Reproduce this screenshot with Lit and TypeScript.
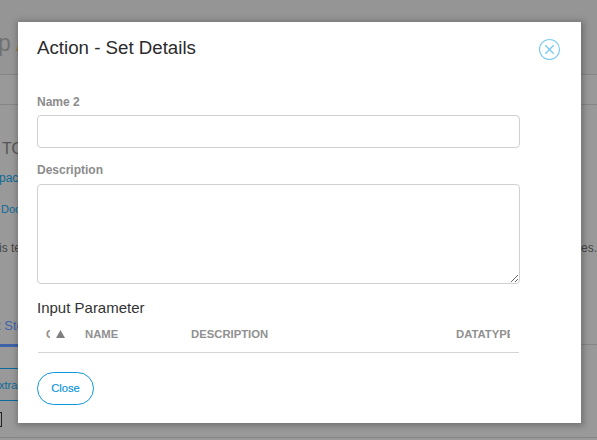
import { LitElement, html, css } from "lit";
import { customElement } from "lit/decorators.js";

@customElement("page-backdrop")
class PageBackdrop extends LitElement {
  static styles = css`
    :host { display: block; height: 440px; overflow: hidden; background: #999; box-sizing: border-box; white-space: nowrap; color: #555; }
    .top { box-sizing: border-box; height: 75px; padding-top: 30px; border-bottom: 1px solid #858585; background: #959595; font-size: 23px; line-height: 26px; color: #717171; text-indent: -2px; }
    .top span { color: #94784a; }
    .bar { box-sizing: border-box; height: 30px; border-bottom: 1px solid #858585; }
    .heading { padding: 35px 0 0 2px; font-size: 16px; line-height: 18px; }
    .link { color: #0c6a98; font-size: 12px; line-height: 16px; padding-top: 12px; text-indent: -1px; }
    .link.small { font-size: 11px; padding-top: 15px; text-indent: 1px; }
    .text { display: flex; justify-content: space-between; padding-top: 23px; font-size: 12px; line-height: 16px; color: #444; }
    .text span:first-child { text-indent: -1px; }
    .tabs { display: flex; box-sizing: border-box; height: 91px; align-items: flex-end; }
    .tab { box-sizing: border-box; width: 90px; height: 30px; border-bottom: 3px solid #3f62a8; font-size: 13px; line-height: 17px; color: #3f62a8; text-indent: -3px; }
    .rule { flex: 1; border-bottom: 1px solid #858585; margin-bottom: 2px; }
    .btn { box-sizing: border-box; width: 100px; height: 33px; margin-top: 21px; border: solid #0c6a98; border-width: 1px 0; color: #0c6a98; font-size: 11px; line-height: 32px; text-indent: -1px; }
    .box { box-sizing: border-box; width: 2px; height: 15px; border-right: 1px solid #222; border-top: 1px solid #222; border-bottom: 1px solid #222; margin-top: 11px; }
    .end { margin-top: 10px; border-top: 1px solid #858585; }
  `;
  render() {
    return html`
      <div class="top">p <span>A</span></div>
      <div class="bar"></div>
      <div class="heading">TO</div>
      <div class="link">pack</div>
      <div class="link small">Doc</div>
      <div class="text"><span>is te</span><span>es.</span></div>
      <div class="tabs"><div class="tab">t Step</div><div class="rule"></div></div>
      <div class="btn">xtract</div>
      <div class="box"></div>
      <div class="end"></div>
    `;
  }
}

@customElement("details-dialog")
class DetailsDialog extends LitElement {
  static styles = css`
    :host { display: block; box-sizing: border-box; width: 563px; height: 401px; padding: 15px 20px 0 19px; background: #fff; box-shadow: 1px 1px 6px 2px rgba(0, 0, 0, 0.25); color: #333; }
    .head { display: flex; justify-content: space-between; height: 56px; }
    h1 { margin: 0; font-size: 18.7px; line-height: 21px; font-weight: 400; color: #2b2b2b; }
    .x { width: 22px; height: 22px; margin-top: 1px; }
    label { display: block; font-size: 12px; line-height: 14px; font-weight: 700; color: #8c8c8c; margin-top: 2px; }
    .field { display: block; box-sizing: border-box; width: 483px; height: 33px; margin: 6px 0 0; border: 1px solid #d0d0d0; border-radius: 4px; background: #fff; outline: 0; }
    .desc { margin-top: 15px; }
    textarea.field { height: 100px; margin-top: 7px; resize: vertical; }
    h2 { margin: 15px 0 0; font-size: 15px; line-height: 18px; font-weight: 400; color: #333; }
    .cols { display: flex; box-sizing: border-box; width: 481px; height: 36px; margin-left: 1px; padding: 11px 0 0 8px; border-bottom: 1px solid #d4d4d4; font-size: 11.3px; line-height: 13px; font-weight: 700; color: #909090; }
    .id { display: flex; width: 39px; }
    .clip { width: 4px; overflow: hidden; }
    .arrow { width: 9px; height: 8px; margin: 2px 0 0 6px; fill: #808080; }
    .name { width: 106px; }
    .description { width: 265px; }
    .type { width: 54px; overflow: hidden; }
    button { display: block; box-sizing: border-box; width: 57px; height: 33px; margin: 19px 0 0; padding: 0 0 1px; border: 1px solid #0e96dc; border-radius: 17px; background: #fff; color: #0e96dc; font: 11.2px "Liberation Sans", Arial, sans-serif; -webkit-text-stroke: 0.2px #0e96dc; }
  `;
  render() {
    return html`
      <div class="head">
        <h1>Action - Set Details</h1>
        <svg class="x" viewBox="0 0 22 22" fill="none" stroke="#7ccaf0">
          <circle cx="10.5" cy="11.5" r="10" stroke-width="1.2" />
          <path d="M6.3 7.3L14.7 15.7M14.7 7.3L6.3 15.7" stroke-width="1.4" />
        </svg>
      </div>
      <label for="name">Name 2</label>
      <input id="name" class="field" />
      <label class="desc" for="desc">Description</label>
      <textarea id="desc" class="field"></textarea>
      <h2>Input Parameter</h2>
      <div class="cols">
        <div class="id"><div class="clip">O</div><svg class="arrow" viewBox="0 0 9 8"><path d="M4.5 0L9 8H0Z" /></svg></div>
        <div class="name">NAME</div>
        <div class="description">DESCRIPTION</div>
        <div class="type">DATATYPE</div>
      </div>
      <button>Close</button>
    `;
  }
}

@customElement("app-root")
class AppRoot extends LitElement {
  static styles = css`
    :host { display: block; position: relative; width: 597px; height: 440px; overflow: hidden; font-family: "Liberation Sans", Arial, sans-serif; }
    .dialog { position: absolute; left: 18px; top: 22px; }
  `;
  render() {
    return html`<page-backdrop></page-backdrop><details-dialog class="dialog"></details-dialog>`;
  }
}
